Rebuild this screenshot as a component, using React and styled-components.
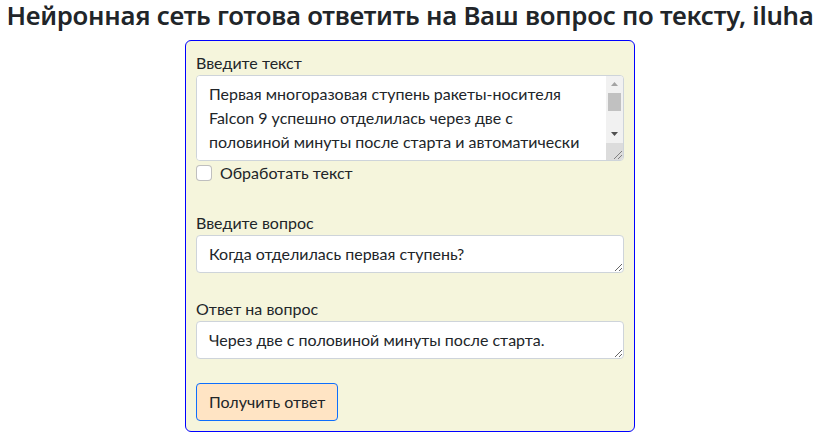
import React from 'react'
import styled, { createGlobalStyle } from 'styled-components'

const Global = createGlobalStyle`
  body {
    margin: 0;
    font-family: Lato, "Noto Sans", sans-serif;
    font-size: 16px;
    line-height: 1.5;
    color: #212529;
    background: #fff;
  }
`

const Page = styled.div`
  padding-right: 5px;
`

const Title = styled.h3`
  margin: 0 0 9px;
  font-family: "Noto Sans", sans-serif;
  font-size: 25.75px;
  font-weight: 600;
  letter-spacing: -0.25px;
  line-height: 1.2;
  text-align: center;
  white-space: nowrap;
`

const Card = styled.form`
  box-sizing: border-box;
  width: 450px;
  margin: 0 auto;
  padding: 10px;
  background: #f5f5dc;
  border: 1px solid #0000ff;
  border-radius: 6px;
`

const Group = styled.div`
  margin-top: ${p => p.top || 0}px;
`

const Label = styled.label`
  display: block;
  line-height: 24px;
`

const Area = styled.textarea`
  display: block;
  box-sizing: border-box;
  width: 100%;
  margin: 0;
  padding: 6px 12px;
  font: inherit;
  line-height: 24px;
  color: #212529;
  background: #fff;
  border: 1px solid #ced4da;
  border-radius: 4px;
  outline: none;
  resize: vertical;
`

// textarea with a drawn scrollbar column beside it
const AreaShell = styled.div`
  display: flex;
  height: 86px;
  box-sizing: border-box;
  background: #fff;
  border: 1px solid #ced4da;
  border-radius: 4px;
  overflow: hidden;
`

const InnerArea = styled(Area)`
  flex: 1;
  width: auto;
  height: 100%;
  border: 0;
  border-radius: 0;
  overflow: hidden;
  resize: none;
`

const Scroll = styled.div`
  display: flex;
  flex-direction: column;
  flex: none;
  width: 17px;
  background: #f1f1f1;
`

const Arrow = styled.div`
  display: flex;
  align-items: center;
  justify-content: center;
  height: 17px;
  flex: none;
`

const Track = styled.div`
  flex: 1;
  padding: 0 2px;
`

const Thumb = styled.div`
  height: 18px;
  background: #c1c1c1;
`

const Corner = styled.div`
  display: flex;
  align-items: flex-end;
  justify-content: flex-end;
  height: 17px;
  flex: none;
  background: #dcdcdc;
`

const CheckRow = styled.label`
  display: flex;
  align-items: center;
  gap: 8px;
  height: 24px;
`

const Box = styled.input`
  appearance: none;
  flex: none;
  width: 16px;
  height: 16px;
  margin: 0;
  background: #fff;
  border: 1px solid rgba(0, 0, 0, 0.25);
  border-radius: 4px;
`

const Submit = styled.button`
  display: block;
  margin-top: 24px;
  padding: 6px 12px;
  font: inherit;
  line-height: 24px;
  color: #212529;
  background: #ffe4c4;
  border: 1px solid #0d6efd;
  border-radius: 4px;
`

const sourceText =
  'Первая многоразовая ступень ракеты-носителя Falcon 9 успешно отделилась через две с половиной минуты после старта и автоматически вернулась на плавучую платформу в Атлантическом океане, а вторая ступень продолжила полёт и вывела на орбиту спутник связи.'

const ScrollBar = () => (
  <Scroll>
    <Arrow>
      <svg width="7" height="4" viewBox="0 0 7 4">
        <polygon points="0,4 3.5,0 7,4" fill="#a3a3a3" />
      </svg>
    </Arrow>
    <Track>
      <Thumb />
    </Track>
    <Arrow>
      <svg width="7" height="4" viewBox="0 0 7 4">
        <polygon points="0,0 7,0 3.5,4" fill="#505050" />
      </svg>
    </Arrow>
    <Corner>
      <svg width="10" height="10" viewBox="0 0 10 10">
        <path d="M1 9 L9 1 M5 9 L9 5" stroke="#808080" strokeWidth="1" />
      </svg>
    </Corner>
  </Scroll>
)

export default function App() {
  return (
    <Page>
      <Global />
      <Title>Нейронная сеть готова ответить на Ваш вопрос по тексту, iluha</Title>
      <Card onSubmit={e => e.preventDefault()}>
        <Group>
          <Label htmlFor="text">Введите текст</Label>
          <AreaShell>
            <InnerArea id="text" rows={3} defaultValue={sourceText} />
            <ScrollBar />
          </AreaShell>
          <CheckRow>
            <Box type="checkbox" />
            Обработать текст
          </CheckRow>
        </Group>
        <Group top={26}>
          <Label htmlFor="question">Введите вопрос</Label>
          <Area id="question" rows={1} defaultValue="Когда отделилась первая ступень?" />
        </Group>
        <Group top={24}>
          <Label htmlFor="answer">Ответ на вопрос</Label>
          <Area id="answer" rows={1} defaultValue="Через две с половиной минуты после старта." />
        </Group>
        <Submit type="submit">Получить ответ</Submit>
      </Card>
    </Page>
  )
}
